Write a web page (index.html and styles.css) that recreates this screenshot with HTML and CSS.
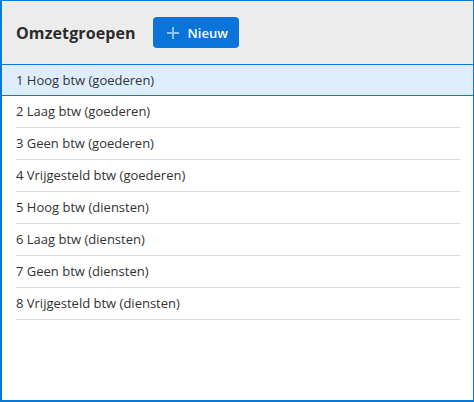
FILE: index.html
```html
<!DOCTYPE html>
<html lang="nl">
<head>
<meta charset="utf-8">
<link rel="stylesheet" href="styles.css">
</head>
<body>
<div class="panel">
  <div class="header">
    <h1 class="title">Omzetgroepen</h1>
    <button class="btn-new" type="button">
      <svg class="plus" width="12" height="12" viewBox="0 0 12 12"><path d="M6 0V12M0 6H12" stroke="#8ec4f1" stroke-width="2"/></svg>
      <span>Nieuw</span>
    </button>
  </div>
  <ul class="list">
    <li class="row selected"><div class="row-inner">1 Hoog btw (goederen)</div></li>
    <li class="row"><div class="row-inner">2 Laag btw (goederen)</div></li>
    <li class="row"><div class="row-inner">3 Geen btw (goederen)</div></li>
    <li class="row"><div class="row-inner">4 Vrijgesteld btw (goederen)</div></li>
    <li class="row"><div class="row-inner">5 Hoog btw (diensten)</div></li>
    <li class="row"><div class="row-inner">6 Laag btw (diensten)</div></li>
    <li class="row"><div class="row-inner">7 Geen btw (diensten)</div></li>
    <li class="row"><div class="row-inner">8 Vrijgesteld btw (diensten)</div></li>
  </ul>
</div>
</body>
</html>
```
FILE: styles.css
```css
html, body {
  margin: 0;
  padding: 0;
  background: #ffffff;
}
.panel {
  width: 474px;
  height: 402px;
  box-sizing: border-box;
  border: 1px solid #0a78d7;
  border-left-width: 2px;
  border-bottom-width: 2px;
  background: #ffffff;
  font-family: "Open Sans", "Liberation Sans", sans-serif;
  color: #333333;
}
.header {
  height: 63px;
  background: #ececec;
  display: flex;
  align-items: center;
  padding-left: 14px;
}
.title {
  margin: 0;
  font-size: 16px;
  font-weight: 700;
  color: #2b2b2b;
  letter-spacing: 0.1px;
}
.btn-new {
  margin-left: 17px;
  width: 86px;
  height: 31px;
  border: none;
  border-radius: 4px;
  background: #0a74da;
  color: #ffffff;
  display: flex;
  align-items: center;
  padding: 0 0 0 14px;
  font-family: "Open Sans", "Liberation Sans", sans-serif;
  font-size: 13px;
  font-weight: 600;
  gap: 9px;
}
.plus {
  display: block;
}
.list {
  list-style: none;
  margin: 0;
  padding: 0;
}
.row {
  padding: 0 13px 0 14px;
  font-size: 13px;
}
.row-inner {
  height: 31px;
  line-height: 31px;
  border-bottom: 1px solid #d9d9d9;
}
.row.selected {
  background: #deeeff;
  border-top: 1px solid #0a78d7;
  border-bottom: 1px solid #0a78d7;
}
.row.selected .row-inner {
  height: 30px;
  line-height: 30px;
  border-bottom: none;
}
```
